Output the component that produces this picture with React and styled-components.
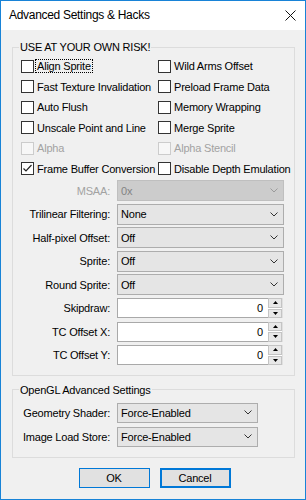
import React from "react";
import styled, { createGlobalStyle } from "styled-components";

const Global = createGlobalStyle`
  html, body {
    margin: 0;
    padding: 0;
    background: #ffffff;
  }
  body {
    font-family: "Liberation Sans", Arial, sans-serif;
    font-size: 11px;
    letter-spacing: -0.2px;
    color: #000;
  }
`;

const Window = styled.div`
  width: 306px;
  height: 500px;
  box-sizing: border-box;
  border: 1px solid #1883d7;
  background: #f0f0f0;
  display: flex;
  flex-direction: column;
`;

const TitleBar = styled.div`
  height: 29px;
  flex: none;
  background: #ffffff;
  display: flex;
  align-items: center;
  justify-content: space-between;
  padding: 0 9px 0 8px;
`;

const Title = styled.span`
  font-size: 12px;
  letter-spacing: -0.3px;
  padding-bottom: 1px;
`;

const Body = styled.div`
  padding: 10px 10px 0 11px;
  display: flex;
  flex-direction: column;
`;

const Group = styled.fieldset`
  margin: ${(p) => p.mt || 0}px 0 0 0;
  padding: 0 0 ${(p) => p.pb}px 8px;
  width: 283px;
  box-sizing: border-box;
  border: 1px solid #dcdcdc;
  min-width: 0;
`;

const Legend = styled.legend`
  margin-left: -2px;
  padding: 0 1px;
  line-height: 14px;
  font-size: 11px;
`;

const CheckGrid = styled.div`
  display: grid;
  grid-template-columns: 137px 1fr;
  grid-auto-rows: 20.5px;
  padding-top: 2px;
`;

const CheckRow = styled.label`
  display: flex;
  align-items: center;
  gap: 2px;
  color: ${(p) => (p.disabled ? "#a2a2a2" : "#000")};
  white-space: nowrap;
`;

const Box = styled.span`
  width: 13px;
  height: 13px;
  box-sizing: border-box;
  flex: none;
  border: 1px solid ${(p) => (p.disabled ? "#cccccc" : "#333333")};
  background: ${(p) => (p.disabled ? "#f7f7f7" : "#ffffff")};
  display: flex;
  align-items: center;
  justify-content: center;
`;

const CheckText = styled.span`
  padding: 0 1px;
  line-height: 12px;
  outline: ${(p) => (p.focused ? "1px dotted #000" : "none")};
  outline-offset: 0;
`;

const FieldGrid = styled.div`
  display: grid;
  grid-template-columns: 89px ${(p) => p.w}px;
  column-gap: 7px;
  row-gap: ${(p) => p.gap}px;
  grid-auto-rows: ${(p) => p.h}px;
  padding-top: ${(p) => p.pt}px;
`;

const Label = styled.span`
  text-align: right;
  white-space: nowrap;
  align-self: center;
  color: ${(p) => (p.disabled ? "#a2a2a2" : "#000")};
`;

const Combo = styled.div`
  box-sizing: border-box;
  border: 1px solid ${(p) => (p.disabled ? "#bfbfbf" : "#adadad")};
  background: ${(p) => (p.disabled ? "#cccccc" : "#e5e5e5")};
  color: ${(p) => (p.disabled ? "#838383" : "#000")};
  display: flex;
  align-items: center;
  justify-content: space-between;
  padding: 0 5px 0 3px;
`;

const Spin = styled.div`
  display: flex;
  align-items: center;
`;

const Edit = styled.div`
  height: 20px;
  width: 151px;
  box-sizing: border-box;
  border: 1px solid #a9a9a9;
  border-right: none;
  background: #ffffff;
  display: flex;
  align-items: center;
  justify-content: flex-end;
  padding-right: 5px;
`;

const SpinButtons = styled.div`
  width: 15px;
  height: 20px;
  display: flex;
  flex-direction: column;
  gap: 1px;
  background: #ffffff;
  border-right: 1px solid #e0e0e0;
  box-sizing: border-box;
`;

const SpinButton = styled.div`
  flex: 1;
  background: #e8e8e8;
  border: 1px solid #c4c4c4;
  display: flex;
  align-items: center;
  justify-content: center;
`;

const ButtonRow = styled.div`
  display: flex;
  justify-content: center;
  gap: 10px;
  margin-top: 10px;
  padding-left: 2px;
`;

const Button = styled.button`
  width: 71px;
  height: 20px;
  box-sizing: border-box;
  font-family: inherit;
  font-size: 11px;
  letter-spacing: -0.2px;
  color: #000;
  background: #e1e1e1;
  border: ${(p) => p.bw}px solid #0078d7;
  padding: 0;
`;

const Chevron = ({ color = "#333" }) => (
  <svg width="8" height="5" viewBox="0 0 8 5">
    <polyline points="0.5,0.5 4,4 7.5,0.5" fill="none" stroke={color} strokeWidth="1" />
  </svg>
);

const Check = () => (
  <svg width="11" height="11" viewBox="0 0 11 11">
    <polyline points="1.5,5.5 4,8 9.5,2" fill="none" stroke="#222" strokeWidth="1.2" />
  </svg>
);

const Arrow = ({ down }) => (
  <svg width="5" height="3" viewBox="0 0 5 3">
    <polygon points={down ? "0,0 5,0 2.5,3" : "0,3 5,3 2.5,0"} fill="#000" />
  </svg>
);

const CloseIcon = () => (
  <svg width="11" height="11" viewBox="0 0 11 11">
    <path d="M0.5 0.5 L10.5 10.5 M10.5 0.5 L0.5 10.5" stroke="#111" strokeWidth="1" />
  </svg>
);

const checks = [
  ["Align Sprite", false, false, true],
  ["Wild Arms Offset"],
  ["Fast Texture Invalidation"],
  ["Preload Frame Data"],
  ["Auto Flush"],
  ["Memory Wrapping"],
  ["Unscale Point and Line"],
  ["Merge Sprite"],
  ["Alpha", false, true],
  ["Alpha Stencil", false, true],
  ["Frame Buffer Conversion", true],
  ["Disable Depth Emulation"],
];

const combos = [
  ["MSAA:", "0x", true],
  ["Trilinear Filtering:", "None"],
  ["Half-pixel Offset:", "Off"],
  ["Sprite:", "Off"],
  ["Round Sprite:", "Off"],
];

const spins = ["Skipdraw:", "TC Offset X:", "TC Offset Y:"];

const App = () => {
  return (
    <>
      <Global />
      <Window>
        <TitleBar>
          <Title>Advanced Settings &amp; Hacks</Title>
          <CloseIcon />
        </TitleBar>
        <Body>
          <Group pb={9}>
            <Legend>USE AT YOUR OWN RISK!</Legend>
            <CheckGrid>
              {checks.map(([text, checked, disabled, focused]) => (
                <CheckRow key={text} disabled={disabled}>
                  <Box disabled={disabled}>{checked && <Check />}</Box>
                  <CheckText focused={focused}>{text}</CheckText>
                </CheckRow>
              ))}
            </CheckGrid>
            <FieldGrid w={167} h={21} gap={2.5} pt={1}>
              {combos.map(([label, value, disabled]) => (
                <React.Fragment key={label}>
                  <Label disabled={disabled}>{label}</Label>
                  <Combo disabled={disabled}>
                    <span>{value}</span>
                    <Chevron color={disabled ? "#9a9a9a" : "#333"} />
                  </Combo>
                </React.Fragment>
              ))}
              {spins.map((label) => (
                <React.Fragment key={label}>
                  <Label>{label}</Label>
                  <Spin>
                    <Edit>0</Edit>
                    <SpinButtons>
                      <SpinButton>
                        <Arrow />
                      </SpinButton>
                      <SpinButton>
                        <Arrow down />
                      </SpinButton>
                    </SpinButtons>
                  </Spin>
                </React.Fragment>
              ))}
            </FieldGrid>
          </Group>
          <Group mt={7} pb={10}>
            <Legend>OpenGL Advanced Settings</Legend>
            <FieldGrid w={141} h={20} gap={4} pt={6}>
              <Label>Geometry Shader:</Label>
              <Combo>
                <span>Force-Enabled</span>
                <Chevron />
              </Combo>
              <Label>Image Load Store:</Label>
              <Combo>
                <span>Force-Enabled</span>
                <Chevron />
              </Combo>
            </FieldGrid>
          </Group>
          <ButtonRow>
            <Button bw={1}>OK</Button>
            <Button bw={2}>Cancel</Button>
          </ButtonRow>
        </Body>
      </Window>
    </>
  );
};

export default App;
